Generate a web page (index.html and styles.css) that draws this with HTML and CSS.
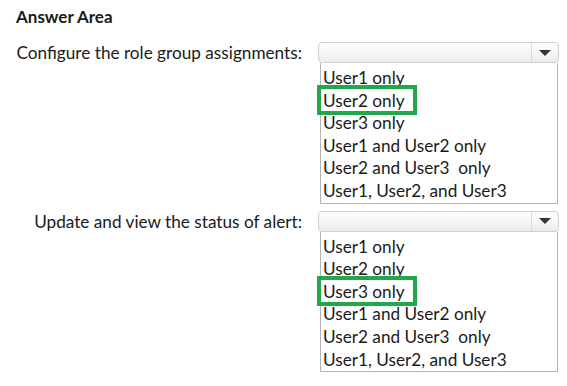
FILE: index.html
```html
<!DOCTYPE html>
<html lang="en">
<head>
    <meta charset="UTF-8">
    <meta name="viewport" content="width=device-width, initial-scale=1.0">
    <title>Answer Area</title>
    <link rel="stylesheet" href="styles.css">
</head>
<body>
    <div class="answer-area">
        <h3 class="title">Answer Area</h3>

        <div class="question">
            <div class="label">Configure the role group assignments:</div>
            <div class="control">
                <div class="select">
                    <span class="value"></span>
                    <span class="arrow"></span>
                </div>
                <ul class="options">
                    <li>User1 only</li>
                    <li class="picked">User2 only</li>
                    <li>User3 only</li>
                    <li>User1 and User2 only</li>
                    <li>User2 and User3&nbsp; only</li>
                    <li>User1, User2, and User3</li>
                </ul>
            </div>
        </div>

        <div class="question">
            <div class="label">Update and view the status of alert:</div>
            <div class="control">
                <div class="select">
                    <span class="value"></span>
                    <span class="arrow"></span>
                </div>
                <ul class="options">
                    <li>User1 only</li>
                    <li>User2 only</li>
                    <li class="picked">User3 only</li>
                    <li>User1 and User2 only</li>
                    <li>User2 and User3&nbsp; only</li>
                    <li>User1, User2, and User3</li>
                </ul>
            </div>
        </div>
    </div>
</body>
</html>
```

FILE: styles.css
```css
body {
    margin: 0;
    background: #fff;
    color: #1a1a1a;
    font-family: Lato, "Open Sans", sans-serif;
}
.answer-area {
    padding: 7px 0 0 16px;
}
.title {
    margin: 0 0 15px;
    font-size: 17px;
    font-weight: bold;
    line-height: 20px;
}
.question {
    display: grid;
    grid-template-columns: 286px 241px;
    column-gap: 16px;
    margin-bottom: 7px;
}
.label {
    text-align: right;
    font-size: 17.2px;
    line-height: 21px;
    white-space: nowrap;
}
.select {
    display: flex;
    height: 21px;
    box-sizing: border-box;
    border: 1px solid #cfcfcf;
    border-radius: 4px;
    background: linear-gradient(#ffffff, #ececec);
}
.select .value {
    flex: 1;
}
.select .arrow {
    width: 26px;
    border-left: 1px solid #dadada;
    display: flex;
    align-items: center;
    justify-content: center;
}
.select .arrow::after {
    content: "";
    border-left: 6px solid transparent;
    border-right: 6px solid transparent;
    border-top: 6px solid #333;
}
.options {
    list-style: none;
    margin: 0 1px 0 2px;
    padding: 4px 0 0 2px;
    border: 1px solid #b4b4b4;
    border-top: none;
    font-size: 17.2px;
    line-height: 22.6px;
}
.options li {
    position: relative;
    white-space: nowrap;
}
.picked::before {
    content: "";
    position: absolute;
    left: -6px;
    top: -5px;
    width: 100px;
    height: 30px;
    box-sizing: border-box;
    border: 4px solid #21a84a;
}
```
